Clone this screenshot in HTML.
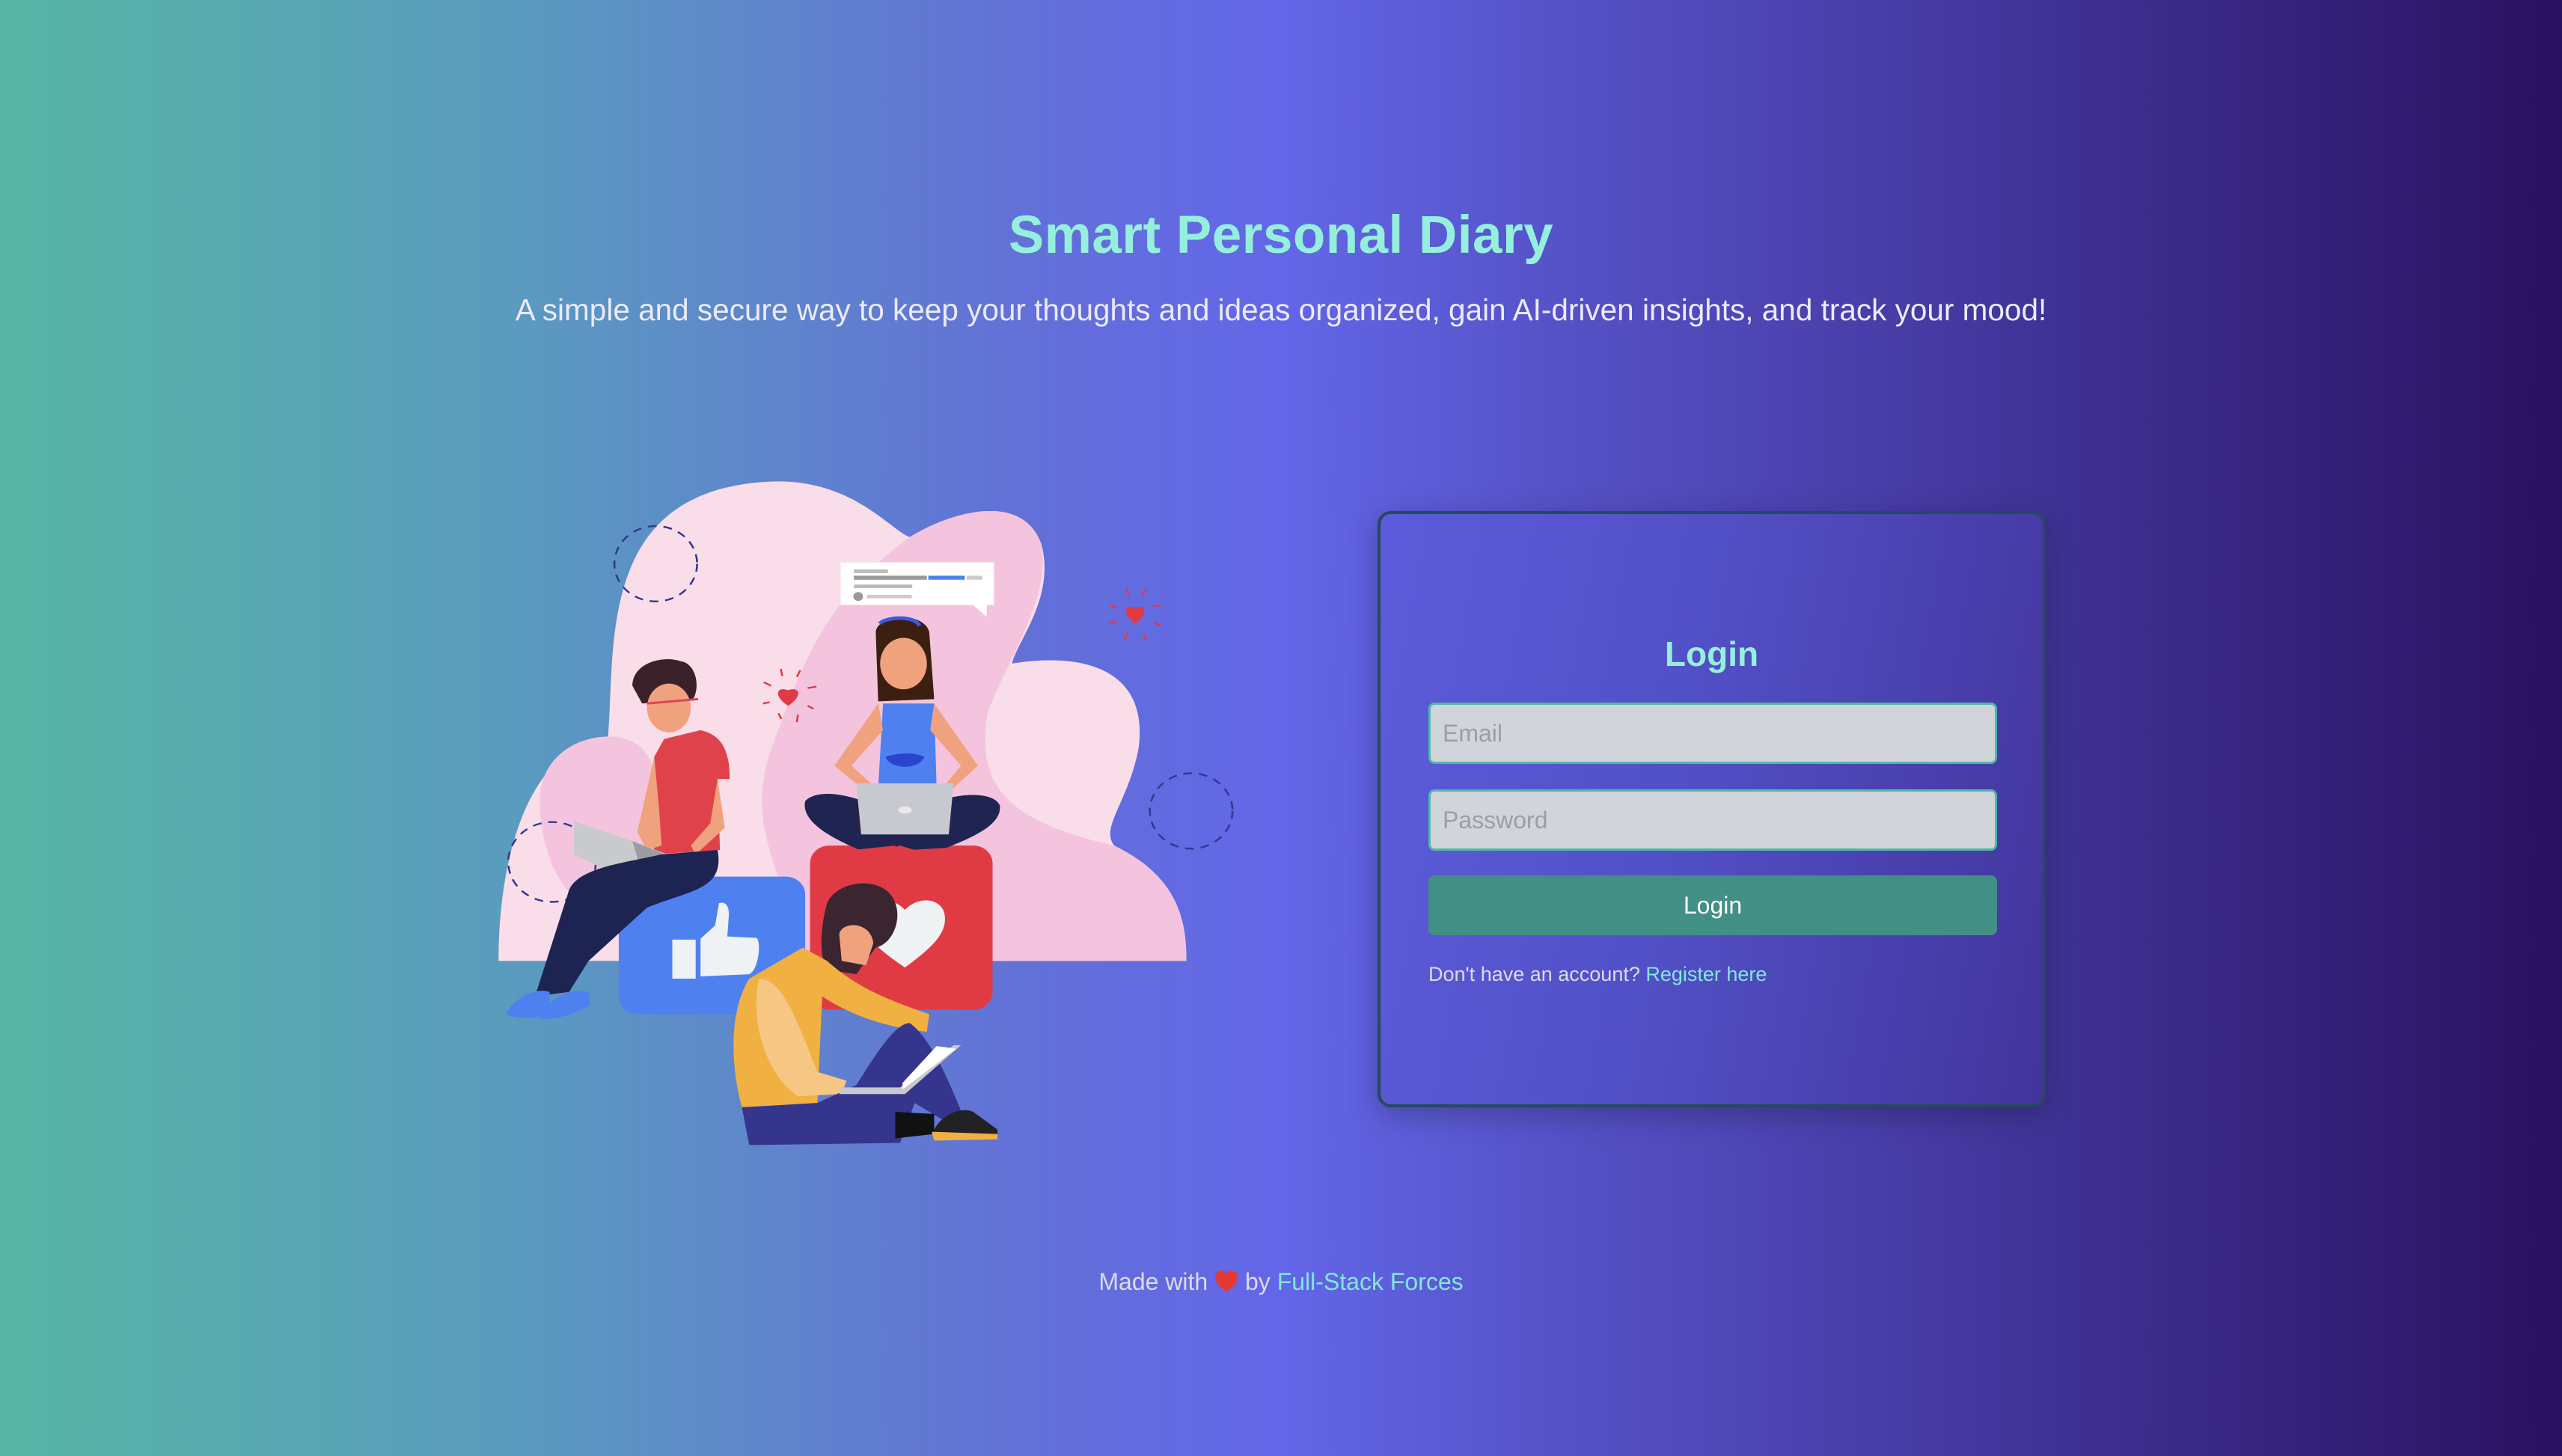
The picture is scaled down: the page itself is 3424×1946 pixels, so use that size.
<!DOCTYPE html>
<html><head><meta charset="utf-8"><style>
*{margin:0;padding:0;box-sizing:border-box}
html,body{width:3424px;height:1946px;overflow:hidden}
body{background:linear-gradient(to right,#56b5a3 0%,#5a9bbf 20%,#6370d8 40%,#6366e8 50%,#5450c4 62%,#4a40ac 72%,#3a2a88 85%,#2a1160 100%);font-family:"Liberation Sans",sans-serif;position:relative}
.title{position:absolute;top:274px;left:0;width:3424px;text-align:center;font-size:71px;font-weight:bold;color:#94f0dc;letter-spacing:0.5px}
.sub{position:absolute;top:391px;left:0;width:3424px;text-align:center;font-size:40.5px;color:#eceaf6}
.card{position:absolute;left:1841px;top:683px;width:893px;height:797px;border:4px solid #264a5c;border-radius:18px;background:linear-gradient(100deg,#5c5cdb 0%,#5250c6 45%,#43349c 100%);box-shadow:0 10px 40px rgba(0,0,0,.25)}
.card h2{position:absolute;top:160px;left:0;width:100%;text-align:center;font-size:46px;color:#94f0dc;font-weight:bold}
.inp{position:absolute;left:64px;width:760px;height:82px;background:#d1d5db;border:3px solid #4fb9a6;border-radius:8px;font-size:32px;color:#9b9ea8;padding-left:16px;line-height:76px}
.btn{position:absolute;left:64px;top:483px;width:760px;height:80px;background:#428f85;border-radius:8px;color:#fff;font-size:32px;text-align:center;line-height:80px}
.reg{position:absolute;left:64px;top:600px;font-size:27px;color:#dcdbe8}
.reg span{color:#80e8da}
.foot{position:absolute;top:1695px;left:0;width:3424px;text-align:center;font-size:32px;color:#dcdbe8}
.foot span{color:#80e8da}
svg.ill{position:absolute;left:650px;top:620px;width:1020px;height:930px}
</style></head><body>
<div class="title">Smart Personal Diary</div>
<div class="sub">A simple and secure way to keep your thoughts and ideas organized, gain AI-driven insights, and track your mood!</div>

<svg class="ill" viewBox="0 0 1568 1568" preserveAspectRatio="none">
<path d="M25,1120 C25,900 80,640 250,615 C265,400 230,60 580,40 C750,30 830,150 870,165 C950,110 1100,60 1140,180 C1170,300 1090,400 1080,450 C1250,420 1360,480 1340,640 C1320,760 1260,820 1290,860 C1400,920 1440,1000 1438,1120 Z" fill="#f9dde9"/>
<path d="M870,165 C950,110 1100,60 1140,180 C1160,300 1080,420 1030,560 C1010,700 1040,800 1290,860 C1400,920 1440,1000 1438,1120 L660,1120 C600,900 520,800 600,600 C650,450 700,300 870,165 Z" fill="#f4c4de"/>
<path d="M110,760 C110,650 200,610 260,615 C330,620 360,680 340,780 C320,900 300,1000 240,1000 C160,1000 110,880 110,760 Z" fill="#f4c4de"/>
<g fill="none" stroke="#2e3a90" stroke-width="4" stroke-dasharray="18 14">
<circle cx="348" cy="225" r="85"/><circle cx="1448" cy="782" r="85"/><circle cx="135" cy="897" r="90"/>
</g>
<rect x="272" y="930" width="383" height="310" rx="40" fill="#4f80f0"/>
<rect x="382" y="1072" width="48" height="88" fill="#eef2f4"/>
<path d="M440,1070 L470,1040 L478,990 C490,985 500,995 498,1020 L495,1065 L555,1068 C565,1075 560,1140 540,1150 L440,1155 Z" fill="#eef2f4"/>
<rect x="665" y="860" width="375" height="370" rx="40" fill="#e03b45"/>
<path d="M860,1135 C800,1090 770,1060 775,1020 C780,980 830,970 860,1005 C890,970 940,980 942,1020 C945,1060 915,1090 860,1135 Z" fill="#eff2f2"/>
<rect x="728" y="222" width="315" height="96" fill="#fff"/>
<path d="M1000,318 L1028,345 L1028,318 Z" fill="#fff"/>
<rect x="755" y="238" width="70" height="8" fill="#bbb"/><rect x="755" y="252" width="150" height="9" fill="#999"/><rect x="908" y="252" width="75" height="9" fill="#4f80f0"/><rect x="987" y="252" width="32" height="9" fill="#ccc"/><rect x="755" y="272" width="120" height="8" fill="#bbb"/><circle cx="764" cy="299" r="10" fill="#999"/><rect x="782" y="295" width="92" height="8" fill="#ccc"/>
<path d="M620,545 C590,525 595,500 620,510 C645,500 650,525 620,545 Z" fill="#e03b45"/>
<path d="M1333,360 C1305,340 1310,312 1333,325 C1356,312 1360,340 1333,360 Z" fill="#e03b45"/>
<g stroke="#e03b45" stroke-width="4"><path d="M605,462L608,478M645,465L638,480M570,492L585,500M660,505L678,502M568,540L582,537M600,562L606,575M640,565L638,582M660,545L672,552"/><path d="M1315,282L1320,298M1355,282L1348,298M1280,318L1295,325M1370,322L1388,318M1280,360L1295,356M1312,395L1318,380M1350,382L1355,398M1372,358L1386,365"/></g>
<path d="M800,380 C800,340 900,330 910,380 L920,530 L805,535 Z" fill="#3b2010"/>
<path d="M808,360 C820,345 880,340 890,365" stroke="#3a5ae0" stroke-width="8" fill="none"/>
<ellipse cx="857" cy="450" rx="48" ry="58" fill="#f0a27f"/>
<path d="M815,540 L920,540 L925,730 L805,730 Z" fill="#4f80f0"/>
<path d="M820,660 C850,650 880,650 900,660 C890,690 830,690 820,660 Z" fill="#2a44d0"/>
<path d="M805,540 L715,680 L770,730 L790,720 L750,680 L815,600 Z" fill="#f0a27f"/>
<path d="M920,540 L1010,680 L960,730 L945,720 L975,680 L912,600 Z" fill="#f0a27f"/>
<path d="M655,760 C680,730 760,740 850,800 C930,740 1040,730 1055,770 C1060,820 980,850 910,880 L850,860 L790,880 C720,850 645,810 655,760 Z" fill="#1f2550"/>
<path d="M760,720 L960,720 L950,835 L770,835 Z" fill="#c8c9ce"/><ellipse cx="860" cy="780" rx="14" ry="8" fill="#e8e8ea"/>
<path d="M755,870 L840,860 L850,895 L760,900 Z M870,870 L950,865 L960,895 L870,900 Z" fill="#e03b45"/>
<path d="M300,500 C300,450 360,430 400,445 C430,450 440,500 425,530 L320,540 Z" fill="#3a2028"/>
<ellipse cx="375" cy="550" rx="45" ry="55" fill="#f0a27f"/>
<path d="M330,540 L435,530" stroke="#e0425a" stroke-width="5"/>
<path d="M365,620 L440,600 C480,610 500,640 500,710 L475,710 L480,870 L345,880 L335,720 L345,660 Z" fill="#e0424c"/>
<path d="M345,660 L310,830 L330,870 L360,860 L355,780 Z" fill="#f0a27f"/>
<path d="M475,710 L490,820 L430,880 L420,860 L460,810 Z" fill="#f0a27f"/>
<path d="M180,805 L300,850 L420,900 L330,960 L180,880 Z" fill="#c9cacd"/>
<path d="M300,850 L425,905 L330,960" fill="#9c9da2"/>
<path d="M475,870 C490,960 420,960 330,1000 L210,1120 L170,1190 L100,1200 L170,960 C190,910 280,900 360,880 Z" fill="#1e2452"/>
<path d="M40,1240 C60,1200 100,1180 130,1190 L130,1240 C110,1250 60,1252 40,1240 Z M110,1250 C130,1200 170,1180 210,1190 L212,1220 C180,1240 140,1255 110,1250 Z" fill="#4f80f0"/>
<path d="M700,990 C720,940 800,930 830,970 C860,1010 840,1080 800,1090 L760,1150 L700,1140 C680,1100 690,1030 700,990 Z" fill="#3a2530"/>
<path d="M725,1060 C730,1030 790,1030 795,1080 L780,1130 L730,1120 Z" fill="#f0a27f"/>
<path d="M650,1090 L700,1120 C760,1180 830,1210 910,1240 L905,1280 C830,1270 760,1250 690,1200 L680,1440 L525,1450 C500,1350 500,1230 540,1160 Z" fill="#f0b042"/>
<path d="M560,1160 C610,1160 640,1260 680,1370 L740,1390 L730,1420 L640,1425 C580,1380 540,1270 560,1160 Z" fill="#f6c683"/>
<path d="M525,1450 L680,1440 L760,1400 C800,1330 840,1260 870,1260 C920,1300 960,1420 980,1470 L940,1480 L880,1440 L850,1530 L540,1535 Z" fill="#35358e"/>
<path d="M725,1420 L860,1420 L975,1310 L960,1310 L850,1405 L725,1405 Z" fill="#c8c9ce"/>
<path d="M855,1410 L965,1318 L925,1312 L855,1395 Z" fill="#fff"/>
<path d="M840,1460 L920,1465 L920,1510 L840,1520 Z" fill="#111"/>
<path d="M920,1500 C940,1460 980,1450 1000,1460 L1050,1500 L1050,1520 L920,1520 Z" fill="#222"/>
<path d="M915,1505 L1050,1510 L1050,1522 L920,1525 Z" fill="#f0b042"/>
</svg>

<div class="card">
<h2>Login</h2>
<div class="inp" style="top:252px">Email</div>
<div class="inp" style="top:368px">Password</div>
<div class="btn">Login</div>
<div class="reg">Don't have an account? <span>Register here</span></div>
</div>

<div class="foot">Made with <svg width="32" height="30" viewBox="0 0 32 30" style="vertical-align:-4px"><path d="M16,29 C6,21 1,16 1,9 C1,3 6,0 10,0 C13,0 15,2 16,5 C17,2 19,0 22,0 C26,0 31,3 31,9 C31,16 26,21 16,29 Z" fill="#e53935"/></svg> by <span>Full-Stack Forces</span></div>
</body></html>
